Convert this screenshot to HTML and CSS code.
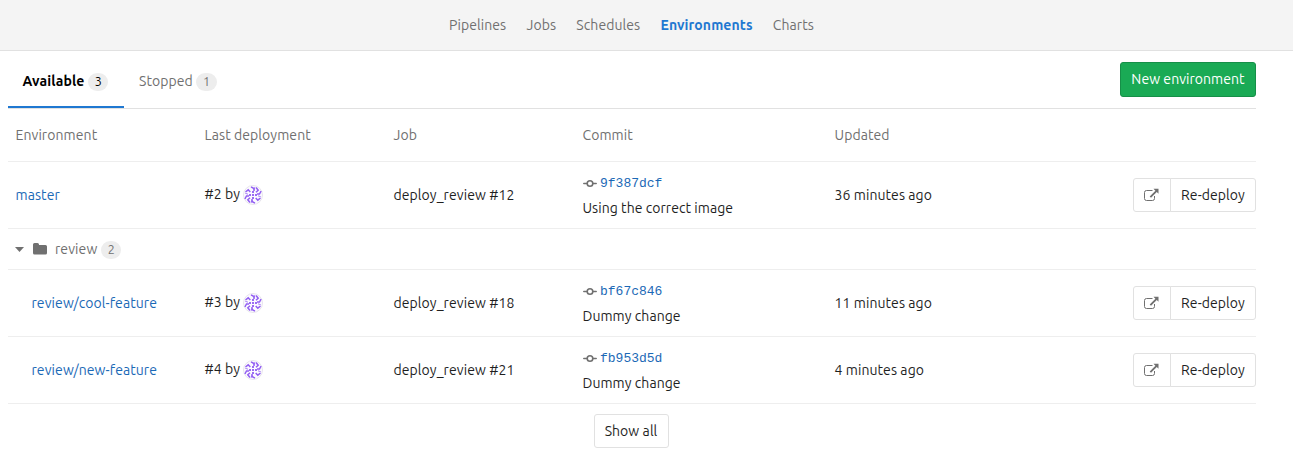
FILE: index.html
```html
<!DOCTYPE html>
<html lang="en">
<head>
<meta charset="utf-8">
<title>Environments</title>
<link rel="stylesheet" href="styles.css">
</head>
<body>
<svg class="sprite" width="0" height="0">
  <symbol id="commit" viewBox="0 0 14 14"><circle cx="7" cy="6.500" r="2.800" fill="none" stroke="currentColor" stroke-width="1.600"/><path d="M.8 6.500h3M10.200 6.500h3" fill="none" stroke="currentColor" stroke-width="1.500" stroke-linecap="round"/></symbol>
  <symbol id="external" viewBox="0 0 15 14"><path d="M8.500 2.500H2.500A2 2 0 0 0 .5 4.500v6a2 2 0 0 0 2 2h6a2 2 0 0 0 2-2V8" fill="none" stroke="currentColor" stroke-width="1"/><path d="M9.500.800h5v5l-1.700-1.700-5.800 5.700-1.300-1.300 5.700-5.800z" fill="currentColor"/></symbol>
  <symbol id="avatar" viewBox="0 0 20 20">
    <circle cx="10" cy="10" r="9.500" fill="#fcfaff" stroke="#e7e5ec"/>
    <g fill="none" stroke="#925ff2" stroke-width="1.500">
      <path d="M11 6V3.500L8 1.900M14 9h2.500L18.100 6M9 14v2.500l3 1.600M6 11H3.500L1.900 14"/>
      <path d="M13 7.300 15.200 5.200 13 2.500M12.700 13l2.100 2.200L17.500 13M7 12.700l-2.200 2.100L7 17.500M7.300 7 5.200 4.800 2.500 7"/>
      <path d="M15 10.800l2.800 1M9.200 15l-1 2.800M5 9.200l-2.800-1M10.800 5l1-2.800" stroke-width=".8"/>
    </g>
    <path d="M9 6h2v2H9zM9 12h2v2H9zM6 9h2v2H6zM12 9h2v2h-2zM9 9h2v2H9z" fill="#9a6cf3"/>
  </symbol>
</svg>
<nav class="nav"><a>Pipelines</a><a>Jobs</a><a>Schedules</a><a class="active">Environments</a><a>Charts</a></nav>
<main class="page">
  <div class="top">
    <a class="tab current"><span>Available</span><span class="badge">3</span></a>
    <a class="tab"><span>Stopped</span><span class="badge">1</span></a>
    <button class="btn create">New environment</button>
  </div>
  <div class="row head"><span class="cell">Environment</span><span class="cell">Last deployment</span><span class="cell">Job</span><span class="cell">Commit</span><span class="cell">Updated</span></div>
  <div class="row">
    <a class="cell link">master</a>
    <div class="cell deploy"><span>#2 by</span><svg class="avatar"><use href="#avatar"/></svg></div>
    <div class="cell">deploy_review #12</div>
    <div class="cell"><div class="sha"><svg><use href="#commit"/></svg><a>9f387dcf</a></div><div class="message">Using the correct image</div></div>
    <div class="cell">36 minutes ago</div>
    <div class="actions"><button class="btn open"><svg><use href="#external"/></svg></button><button class="btn redeploy">Re-deploy</button></div>
  </div>
  <div class="folder"><svg class="caret" viewBox="0 0 9 5"><path d="M0 0h9L4.500 5z"/></svg><svg class="dir" viewBox="0 0 14 12"><path d="M0 1.500Q0 0 1.500 0h3Q6 0 6 1.500V2h6.500Q14 2 14 3.500v6.500q0 1.500-1.500 1.500h-11Q0 11.500 0 10z"/></svg><span>review</span><span class="badge">2</span></div>
  <div class="row child">
    <a class="cell link">review/cool-feature</a>
    <div class="cell deploy"><span>#3 by</span><svg class="avatar"><use href="#avatar"/></svg></div>
    <div class="cell">deploy_review #18</div>
    <div class="cell"><div class="sha"><svg><use href="#commit"/></svg><a>bf67c846</a></div><div class="message">Dummy change</div></div>
    <div class="cell">11 minutes ago</div>
    <div class="actions"><button class="btn open"><svg><use href="#external"/></svg></button><button class="btn redeploy">Re-deploy</button></div>
  </div>
  <div class="row child">
    <a class="cell link">review/new-feature</a>
    <div class="cell deploy"><span>#4 by</span><svg class="avatar"><use href="#avatar"/></svg></div>
    <div class="cell">deploy_review #21</div>
    <div class="cell"><div class="sha"><svg><use href="#commit"/></svg><a>fb953d5d</a></div><div class="message">Dummy change</div></div>
    <div class="cell">4 minutes ago</div>
    <div class="actions"><button class="btn open"><svg><use href="#external"/></svg></button><button class="btn redeploy">Re-deploy</button></div>
  </div>
  <div class="more"><button class="btn show">Show all</button></div>
</main>
</body>
</html>
```
FILE: styles.css
```css
* { box-sizing: border-box; }
body { margin: 0; background: #fff; color: #1f1f1f; font: 14px/20px Ubuntu, "Noto Sans", sans-serif; letter-spacing: .08px; white-space: nowrap; }
.sprite { display: none; }
.nav { height: 51px; background: #f4f4f4; border-bottom: 1px solid #e1e1e1; display: flex; align-items: center; padding-left: 449px; gap: 20.200px; color: #707070; }
.nav .active { color: #1f78d1; font-weight: 700; letter-spacing: .1px; }
.page { width: 1248px; margin-left: 8px; }
.top { height: 58px; display: flex; align-items: flex-start; border-bottom: 1px solid #e1e1e1; }
.tab { height: 57px; display: flex; align-items: flex-start; gap: 3.500px; padding: 20px 15px 0; color: #707070; }
.tab.current { width: 116px; padding-left: 14.500px; color: #000; font-weight: 700; border-bottom: 2px solid #1f78d1; letter-spacing: .1px; }
.badge { height: 18px; min-width: 20.500px; margin-top: 2px; border-radius: 9px; background: #ededed; font-size: 12.500px; line-height: 17px; text-align: center; font-weight: 400; letter-spacing: 0; }
.btn { height: 34px; border: 1px solid #e1e1e1; border-radius: 3px; background: #fff; color: #1f1f1f; font: inherit; letter-spacing: inherit; padding: 0; }
.create { width: 136px; height: 35px; margin: 11px 0 0 auto; padding-bottom: 2px; color: #fff; background: #1aaa55; border-color: #168f48; letter-spacing: .05px; }
.row { height: 67px; display: grid; grid-template-columns: 189px 189px 189px 252px 1fr 123px; align-items: center; border-bottom: 1px solid #eee; }
.head { height: 53px; color: #707070; }
.cell { padding-left: 7.500px; }
.link, .sha a { color: #1b69b6; }
.child .link { padding-left: 23.500px; }
.deploy { display: flex; gap: 3px; align-items: center; }
.deploy span { margin-top: -2px; }
.avatar { width: 20px; height: 20px; }
.sha { display: flex; align-items: center; gap: 3px; height: 20px; font: 13px/20px "Liberation Mono", monospace; letter-spacing: 0; margin-top: 2px; }
.sha svg { width: 14px; height: 14px; color: #707070; }
.sha a { padding-left: .500px; }
.message { margin-top: 4px; letter-spacing: .05px; }
.actions { display: flex; }
.open { width: 38px; border-radius: 3px 0 0 3px; display: grid; place-items: center; color: #707070; padding: 0 1px 1px 0; }
.open svg { width: 15px; height: 14px; }
.redeploy { width: 86px; margin-left: -1px; border-radius: 0 3px 3px 0; }
.folder { height: 41px; border-bottom: 1px solid #eee; display: flex; align-items: center; padding-left: 7px; color: #707070; fill: #707070; }
.caret { width: 9px; height: 5px; margin-right: 9px; }
.dir { width: 14px; height: 12px; margin: -1px 8px 0 0; }
.folder .badge { margin-left: 4px; min-width: 20px; }
.more { height: 54px; display: flex; justify-content: center; padding: 10px 2px 0 0; }
.show { width: 75px; }
```
